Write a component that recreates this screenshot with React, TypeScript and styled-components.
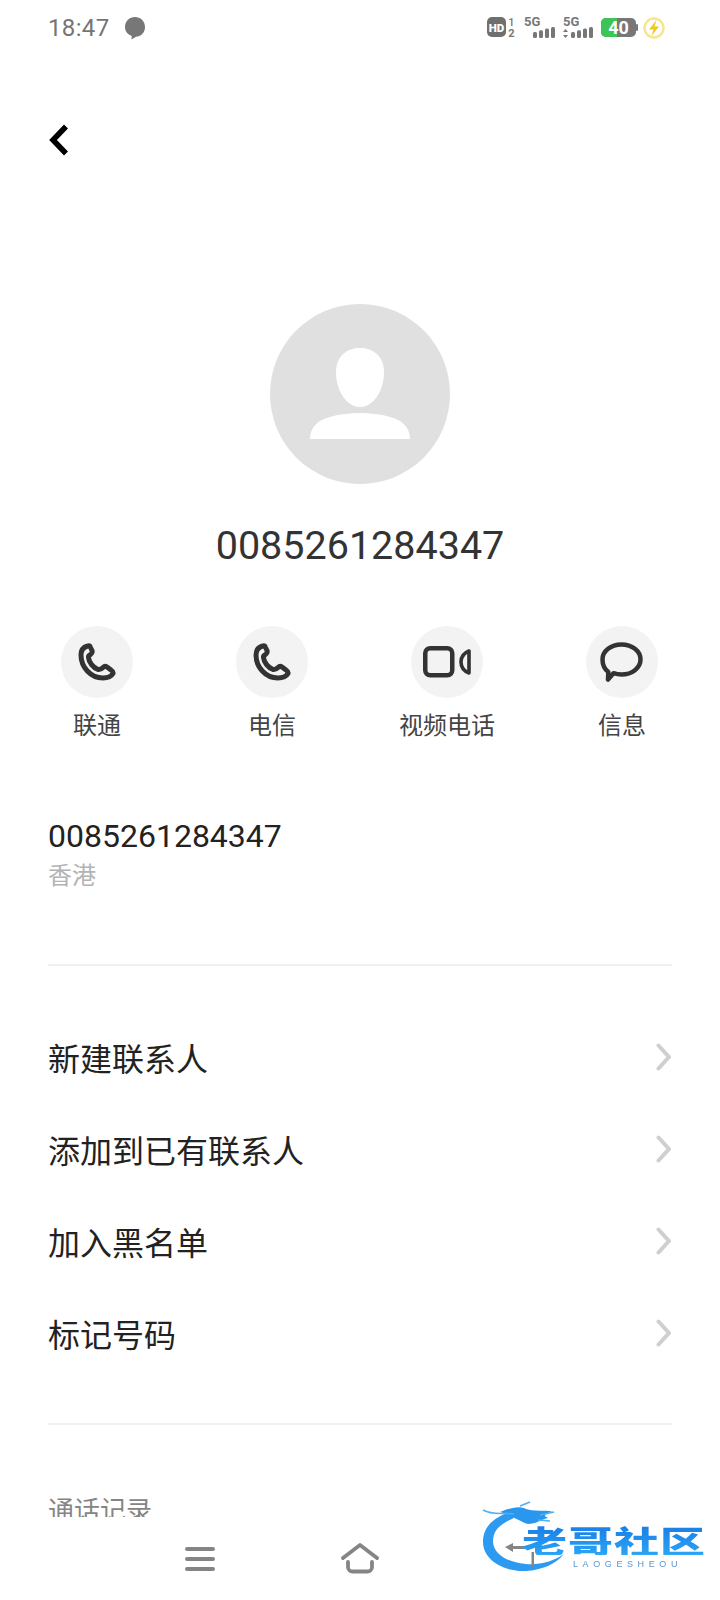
import React from "react";
import styled, { createGlobalStyle } from "styled-components";

const Global = createGlobalStyle`
  html, body { margin: 0; padding: 0; background: #fff; }
  body { font-family: Roboto, "Noto Sans CJK SC", sans-serif; }
`;
const Screen = styled.div`
  width: 720px; height: 1600px; position: relative; overflow: hidden; background: #fff;
  display: flex; flex-direction: column;
`;
const StatusBar = styled.div`
  height: 56px; padding: 0 54px 0 48px; flex: none;
  display: flex; align-items: center; justify-content: space-between;
`;
const StatusLeft = styled.div`display: flex; align-items: center; gap: 14px;`;
const Time = styled.span`font-size: 24px; color: #757575; letter-spacing: .35px;`;
const StatusRight = styled.div`display: flex; align-items: center;`;
const Main = styled.div`flex: 1; min-height: 0; overflow: hidden; display: flex; flex-direction: column;`;
const Back = styled.div`height: 36px; margin: 66px 0 0 46px; flex: none;`;
const Avatar = styled.div`
  width: 180px; height: 180px; border-radius: 50%; background: #e0e0e0; flex: none;
  margin: 146px auto 0; display: flex; align-items: center; justify-content: center;
`;
const Title = styled.div`
  margin-top: 37px; text-align: center; font-size: 39.5px; line-height: 50px; color: #333; flex: none;
`;
const Actions = styled.div`
  margin-top: 55px; padding: 0 9px; display: grid; grid-template-columns: repeat(4, 175px); flex: none;
`;
const Action = styled.div`display: flex; flex-direction: column; align-items: center; gap: 11px;`;
const Circle = styled.div`
  width: 72px; height: 72px; border-radius: 50%; background: #f3f3f3;
  display: flex; align-items: center; justify-content: center;
`;
const ActionLabel = styled.div`font-size: 24px; line-height: 34px; color: #444; padding-left: 1px;`;
const Info = styled.div`margin: 71px 48px 0; flex: none;`;
const Number = styled.div`font-size: 32px; line-height: 44px; color: #222;`;
const Region = styled.div`font-size: 24px; line-height: 34px; color: #b3b3b3; margin-top: 1px;`;
const Divider = styled.div<{ $top: number }>`
  height: 2px; background: #f0f0f0; margin: ${(p) => p.$top}px 48px 0; flex: none;
`;
const List = styled.div`margin-top: 45px; padding: 0 48px; flex: none;`;
const Row = styled.div`
  height: 92px; display: flex; align-items: center; justify-content: space-between;
  font-size: 32px; color: #222;
`;
const Section = styled.div`
  margin: 69px 48px 0; font-size: 26px; line-height: 34px; color: #858585; flex: none;
`;
const NavBar = styled.div`
  height: 83px; background: #fff; flex: none; display: grid; grid-template-columns: repeat(3, 160px);
  justify-content: center; align-items: center;
`;
const NavItem = styled.div`display: flex; justify-content: center; align-items: center;`;
const Watermark = styled.div`
  position: absolute; left: 480px; top: 1500px; width: 230px; height: 80px; filter: blur(.5px);
`;
const WmText = styled.div`
  position: absolute; left: 42px; top: 25px; font-family: "Noto Sans CJK SC", sans-serif;
  font-weight: 900; font-size: 45px; line-height: 44px; letter-spacing: 1px; white-space: nowrap;
  transform: scaleY(.68); transform-origin: top left;
  background: linear-gradient(#1a7de6, #2aa5f5); -webkit-background-clip: text; background-clip: text; color: transparent;
`;
const WmSub = styled.div`
  position: absolute; left: 93px; top: 59px; font-family: "Liberation Sans", sans-serif;
  font-size: 9px; line-height: 10px; letter-spacing: 4.600px; color: #5a94cf; white-space: nowrap;
`;
const Chevron = () => (
  <svg width="16" height="28" viewBox="0 0 16 28"><path d="M2.500 2.500L13 14 2.500 25.500" fill="none" stroke="#cfcfcf" strokeWidth="4" strokeLinecap="round" strokeLinejoin="round" /></svg>
);
const PhoneIcon = () => (
  <svg width="38" height="38" viewBox="0 0 38 38" fill="none" stroke="#333" strokeWidth="5" strokeLinejoin="round" strokeLinecap="round">
    <path d="M9.500 3C6 4 3 7 3 12c0 12 9.500 23 22 23 5 0 8.500-2 10-4.500.5-1.500-.5-2.500-2-3.500L29 24c-1.500-1-2.500-1-4 .5-2 2-3 2.500-5 2-5-2-9-7-9.500-12-.2-1.500 1-2.500 2-3 2-1.500 2-2.500 1.500-4L12.500 4.500C12 3 11 2.500 9.500 3z" />
  </svg>
);
const VideoIcon = () => (
  <svg width="48" height="32" viewBox="0 0 48 32" fill="none" stroke="#333" strokeWidth="4.500">
    <rect x="2.250" y="2.250" width="27" height="27" rx="5" />
    <path d="M46 5v22c-5-2-8-6-8-11s3-9 8-11z" strokeWidth="3.600" strokeLinejoin="round" />
  </svg>
);
const ChatIcon = () => (
  <svg width="43" height="40" viewBox="0 0 43 40" fill="none" stroke="#333" strokeWidth="4.500" strokeLinejoin="round">
    <path d="M21.500 2.500c10.500 0 19 6.500 19 15s-8.500 15-19 15c-3 0-5.500-.5-8-1.300L8 37.500l.3-7.500C4.500 27 2.500 22.500 2.500 17.500c0-8.500 8.500-15 19-15z" />
  </svg>
);
const Bubble = () => (
  <svg width="22" height="24" viewBox="0 0 22 24"><path d="M11 1c5.500 0 10 4 10 10s-4.500 9.500-9 9.800L7.500 23.500l.3-3.500C3.500 18.500 1 15 1 11 1 5 5.500 1 11 1z" fill="#777" /></svg>
);
const SignalIcon = styled.svg`margin-left: 7px;`;
const BatteryIcon = styled.svg`margin-left: 4px;`;
const BoltIcon = styled.svg`margin-left: 3px;`;
const Signal = ({ arrows }: { arrows?: boolean }) => {
  const w = arrows ? 34 : 32;
  return (
    <SignalIcon width={w} height="26" viewBox={`0 0 ${w} 26`}>
      <text x="0" y="11" fontFamily="Roboto, sans-serif" fontWeight="700" fontSize="13" fill="#777">5G</text>
      {arrows && <path d="M0 17l2.500-3 2.500 3zM0 20l2.500 3 2.500-3z" fill="#777" />}
      {[0, 1, 2, 3].map((i) => {
        const x = (arrows ? 8 : 9) + i * 6;
        const h = 6 + i * 1.700;
        return <rect key={i} x={x} y={23 - h} width="4" height={h} rx="1.500" fill="#777" />;
      })}
    </SignalIcon>
  );
};
const StatusIcons = () => (
  <StatusRight>
    <svg width="30" height="24" viewBox="0 0 30 24">
      <rect x="0" y="1" width="19" height="20" rx="5" fill="#6f6f6f" />
      <text x="9.500" y="16" textAnchor="middle" fontFamily="Roboto, sans-serif" fontWeight="900" fontSize="11.500" fill="#fff">HD</text>
      <text x="24.500" y="10" textAnchor="middle" fontFamily="Roboto, sans-serif" fontWeight="500" fontSize="11" fill="#777">1</text>
      <text x="24.500" y="21" textAnchor="middle" fontFamily="Roboto, sans-serif" fontWeight="700" fontSize="11" fill="#777">2</text>
    </svg>
    <Signal />
    <Signal arrows />
    <BatteryIcon width="38" height="24" viewBox="0 0 38 24">
      <rect x="0" y="2" width="35" height="19" rx="5" fill="#777" />
      <path d="M5 2h11v19H5a5 5 0 0 1-5-5V7a5 5 0 0 1 5-5z" fill="#3cc556" />
      <rect x="35" y="8" width="2" height="7" rx="1" fill="#777" />
      <text x="17.500" y="18" textAnchor="middle" fontFamily="Roboto, sans-serif" fontWeight="700" fontSize="18" fill="#fff">40</text>
    </BatteryIcon>
    <BoltIcon width="24" height="24" viewBox="0 0 24 24">
      <circle cx="12" cy="12" r="9.500" fill="none" stroke="#f7e68f" strokeWidth="2.500" />
      <path d="M14.500 4L7 13.500h4.500L9.500 20l7.500-9.500h-4.500z" fill="#f2c81e" />
    </BoltIcon>
  </StatusRight>
);
const DragonSvg = styled.svg`position: absolute; left: 0; top: 0;`;
const Dragon = () => (
  <DragonSvg width="230" height="80" viewBox="0 0 230 80">
    <path d="M30 12C12 18 3 28 3 42c0 18 21 30 43 29 16-1 30-7 38-17-12 8-24 11-38 10C26 62 14 54 13 42c0-12 7-18 21-24z" fill="#2b9af0" />
    <path d="M20 12c10-4 18-6 24-4 8 4 16 2 28 3-6 3-10 5-4 7-8 2-12 6-20 6-8-2-14-8-28-12z" fill="#2a97ee" />
    <path d="M3 10c11 6 21 2 31 4M40 6l10-4M60 15l14-3M58 20l12 1" fill="none" stroke="#4fb0f2" strokeWidth="1.500" />
    <path d="M25 47l8-4v3h19v3H33v3z" fill="#858585" />
    <rect x="51.500" y="52" width="2.500" height="15" fill="#858585" />
  </DragonSvg>
);
const Logo = () => (
  <Watermark>
    <Dragon />
    <WmText>老哥社区</WmText>
    <WmSub>LAOGESHEOU</WmSub>
  </Watermark>
);

const actions = [
  { label: "联通", icon: <PhoneIcon /> },
  { label: "电信", icon: <PhoneIcon /> },
  { label: "视频电话", icon: <VideoIcon /> },
  { label: "信息", icon: <ChatIcon /> },
];
const rows = ["新建联系人", "添加到已有联系人", "加入黑名单", "标记号码"];

export default function App() {
  return (
    <Screen>
      <Global />
      <StatusBar>
        <StatusLeft><Time>18:47</Time><Bubble /></StatusLeft>
        <StatusIcons />
      </StatusBar>
      <Main>
        <Back>
          <svg width="24" height="36" viewBox="0 0 24 36"><path d="M20 4.500L7 18l13 13.500" fill="none" stroke="#000" strokeWidth="5.500" /></svg>
        </Back>
        <Avatar>
          <svg width="100" height="92" viewBox="0 0 100 92">
            <path d="M50 0c14 0 24 9 24 24 0 18-10 35-24 35S26 42 26 24C26 9 36 0 50 0z" fill="#fff" />
            <path d="M0 91c0-12 8-19 20-22 10-3 20-4 30-4s20 1 30 4c12 3 20 10 20 22z" fill="#fff" />
          </svg>
        </Avatar>
        <Title>0085261284347</Title>
        <Actions>
          {actions.map((a) => (
            <Action key={a.label}><Circle>{a.icon}</Circle><ActionLabel>{a.label}</ActionLabel></Action>
          ))}
        </Actions>
        <Info>
          <Number>0085261284347</Number>
          <Region>香港</Region>
        </Info>
        <Divider $top={71} />
        <List>
          {rows.map((r) => <Row key={r}>{r}<Chevron /></Row>)}
        </List>
        <Divider $top={44} />
        <Section>通话记录</Section>
      </Main>
      <NavBar>
        <NavItem>
          <svg width="30" height="26" viewBox="0 0 30 26"><path d="M2 3h26M2 13h26M2 23h26" stroke="#858585" strokeWidth="4" strokeLinecap="round" /></svg>
        </NavItem>
        <NavItem>
          <svg width="38" height="32" viewBox="0 0 38 32" fill="none" stroke="#858585" strokeWidth="3.800" strokeLinecap="round" strokeLinejoin="round"><path d="M2 15L19 2l17 13M7 19v5a4.500 4.500 0 0 0 4.500 4.500h15A4.500 4.500 0 0 0 31 24v-5" /></svg>
        </NavItem>
        <NavItem />
      </NavBar>
      <Logo />
    </Screen>
  );
}
